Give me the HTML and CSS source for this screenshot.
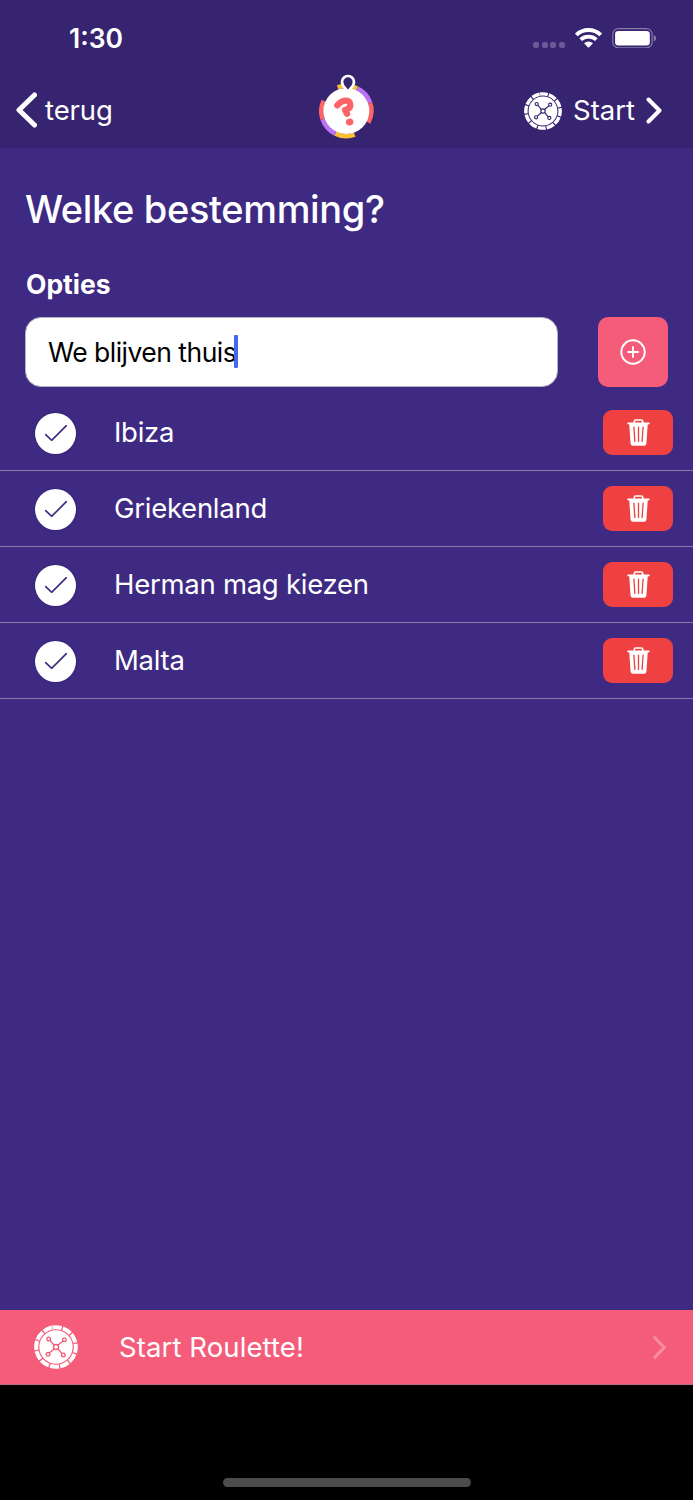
FILE: index.html
```html
<!DOCTYPE html>
<html lang="nl">
<head>
<meta charset="utf-8">
<title>Welke bestemming?</title>
<link rel="stylesheet" href="styles.css">
</head>
<body>
<svg class="defs" aria-hidden="true">
  <symbol id="wheel" viewBox="-66 -66 132 132">
    <circle r="59.5" fill="none" stroke="#fff" stroke-width="12" stroke-dasharray="27.15 4" transform="rotate(-100)"/>
    <circle r="50" fill="#fff"/>
    <g class="cut">
      <path d="M-18-20-6-6M21-18 6-6M18 20 6 6M-20 18-6 6"/>
      <circle r="7.5"/>
      <circle cx="-22" cy="-24" r="5.5"/>
      <circle cx="25" cy="-22" r="5.5"/>
      <circle cx="22" cy="24" r="5.5"/>
      <circle cx="-24" cy="22" r="5.5"/>
    </g>
  </symbol>
  <symbol id="trash" viewBox="0 0 68 82">
    <path d="M21 14V8Q21 3 26 3H42Q47 3 47 8V14" fill="none" stroke="#fff" stroke-width="5"/>
    <path d="M2 11H66Q68 11 68 14Q68 16 66 16L62 17 58 75Q57 81 51 81H17Q11 81 10 75L6 17 2 16Q0 16 0 14Q0 11 2 11Z" fill="#fff"/>
    <path d="M20 25 23 68M34 25V68M48 25 45 68" fill="none" stroke="#ef4141" stroke-width="4" stroke-linecap="round"/>
  </symbol>
  <symbol id="check" viewBox="0 0 66 48">
    <path d="M2 29 20 46 64 2" fill="none" stroke="#3e2a82" stroke-width="5" stroke-linecap="round" stroke-linejoin="miter"/>
  </symbol>
</svg>

<header class="header">
  <div class="status">
    <span class="time">1:30</span>
    <div class="signals">
      <span class="dots"><i></i><i></i><i></i><i></i></span>
      <svg class="wifi" viewBox="0 0 81 60">
        <g fill="none" stroke="#fff" stroke-width="11.500">
          <path d="M4 21Q19 6 40.500 6T77 21"/>
          <path d="M17 35Q27 26 40.500 26T64 35"/>
        </g>
        <path d="M27 46Q40.500 35 54 46L43 57Q40.500 60 38 57Z" fill="#fff"/>
      </svg>
      <svg class="battery" viewBox="0 0 134 62">
        <rect x="2" y="2" width="119" height="58" rx="17" fill="none" stroke="#877ba8" stroke-width="3.500"/>
        <rect x="9" y="9" width="105" height="44" rx="10" fill="#fff"/>
        <path d="M126 21Q133 24 133 31T126 41Z" fill="#877ba8"/>
      </svg>
    </div>
  </div>
  <nav class="nav">
    <a class="back">
      <svg viewBox="0 0 21 36"><path d="M18.500 3 3 18 18.500 33" fill="none" stroke="#fff" stroke-width="5" stroke-linecap="round" stroke-linejoin="round"/></svg>
      <span>terug</span>
    </a>
    <svg class="logo" viewBox="45 15 180 216">
      <g fill="none" stroke-width="14">
        <path d="M113 67A75 75 0 0 1 171 70" stroke="#fcc132"/>
        <path d="M171 70A75 75 0 0 1 210 113" stroke="#bd72f5"/>
        <path d="M210 113A75 75 0 0 1 205 173" stroke="#fd6467"/>
        <path d="M164 209A75 75 0 0 1 106 206" stroke="#fcc132"/>
        <path d="M106 206A75 75 0 0 1 68 163" stroke="#bd72f5"/>
        <path d="M68 163A75 75 0 0 1 71 107" stroke="#fd6467"/>
      </g>
      <circle cx="139" cy="138" r="69" fill="#fff"/>
      <path d="M144 80C137 69 126 64 126 51A18 18 0 0 1 162 51C162 64 151 69 144 80Z" fill="#372470" stroke="#fff" stroke-width="8" stroke-linejoin="round"/>
      <path d="M112 121Q121 109 135 107Q151 106 151 119Q151 132 135 135L141 146" fill="none" stroke="#fd6467" stroke-width="19" stroke-linecap="round" stroke-linejoin="round"/>
      <ellipse cx="149" cy="171" rx="11.500" ry="10" fill="#fd6467" transform="rotate(-20 149 171)"/>
    </svg>
    <a class="next">
      <svg class="wheel"><use href="#wheel"/></svg>
      <span>Start</span>
      <svg class="chev" viewBox="0 0 16 27"><path d="M2.500 2.500 13.500 13.500 2.500 24.500" fill="none" stroke="#fff" stroke-width="4" stroke-linecap="round" stroke-linejoin="round"/></svg>
    </a>
  </nav>
</header>

<main class="content">
  <h1 class="title">Welke bestemming?</h1>
  <h2 class="subtitle">Opties</h2>
  <div class="entry">
    <div class="field"><span>We blijven thuis</span><i class="caret"></i></div>
    <button class="add" aria-label="Toevoegen">
      <svg viewBox="0 0 26 26" fill="none" stroke="#fff" stroke-width="1.900" stroke-linecap="round"><circle cx="13" cy="13" r="11.700"/><path d="M13 8V18M8 13H18"/></svg>
    </button>
  </div>
  <ul class="options">
    <li class="option"><span class="tick"><svg><use href="#check"/></svg></span><span class="name">Ibiza</span><button class="delete"><svg><use href="#trash"/></svg></button></li>
    <li class="option"><span class="tick"><svg><use href="#check"/></svg></span><span class="name">Griekenland</span><button class="delete"><svg><use href="#trash"/></svg></button></li>
    <li class="option"><span class="tick"><svg><use href="#check"/></svg></span><span class="name">Herman mag kiezen</span><button class="delete"><svg><use href="#trash"/></svg></button></li>
    <li class="option"><span class="tick"><svg><use href="#check"/></svg></span><span class="name">Malta</span><button class="delete"><svg><use href="#trash"/></svg></button></li>
  </ul>
</main>

<a class="launch">
  <svg class="wheel"><use href="#wheel"/></svg>
  <span>Start Roulette!</span>
  <svg class="chev" viewBox="0 0 13 23"><path d="M1.700 1.700 11.300 11.500 1.700 21.300" fill="none" stroke="#f98ba0" stroke-width="3.200" stroke-linecap="round" stroke-linejoin="round"/></svg>
</a>
<footer class="home"><i class="indicator"></i></footer>
</body>
</html>
```
FILE: styles.css
```css
* { box-sizing: border-box; }
body {
  margin: 0;
  height: 1500px;
  display: flex;
  flex-direction: column;
  background: #000;
  color: #fff;
  font-family: Inter, "Liberation Sans", sans-serif;
  font-size: 27.5px;
  line-height: 34px;
  overflow: hidden;
}
svg { display: block; flex: none; }
button { border: 0; padding: 0; display: flex; align-items: center; justify-content: center; }
.defs { position: absolute; width: 0; height: 0; }
.cut { fill: #fff; stroke: var(--cut); stroke-width: 4; }

.header { height: 148px; background: #372470; --cut: #372470; }
.status { height: 74px; padding: 0 37px 0 69px; display: flex; justify-content: space-between; align-items: center; }
.time { font-size: 26.5px; font-weight: 600; padding-top: 1px; }
.signals { display: flex; align-items: center; padding-top: 2px; }
.dots { display: flex; gap: 2.4px; margin: 13px 10px 0 0; }
.dots i { width: 6px; height: 6px; border-radius: 2px; background: #685a94; }
.wifi { width: 27px; height: 20px; margin-right: 10px; }
.battery { width: 44.5px; height: 20.5px; }
.nav { height: 74px; padding: 0 31px 0 16px; display: grid; grid-template-columns: 1fr 60px 1fr; align-items: center; }
.nav span { padding-bottom: 2px; }
.back { display: flex; align-items: center; gap: 8px; }
.back svg { width: 21px; height: 36px; margin-top: -2px; }
.back span { letter-spacing: -0.1px; }
.logo { width: 60px; height: 72px; margin: -10px 0 0 6px; }
.next { display: flex; align-items: center; justify-content: flex-end; }
.next .wheel { width: 38px; height: 38px; margin-right: 11px; }
.next .chev { width: 16px; height: 27px; margin: -1px 0 0 11px; }

.content { flex: 1; background: #3e2a82; }
.title { margin: 0; padding: 37px 25px 0; font-size: 38px; line-height: 48px; font-weight: 500; letter-spacing: -0.35px; }
.subtitle { margin: 0; padding: 34px 26px 0; font-size: 26.5px; line-height: 34px; font-weight: 700; }
.entry { display: flex; justify-content: space-between; padding: 16px 25px 0; }
.field { width: 533px; height: 70px; padding-left: 22px; display: flex; align-items: center; background: #fff; border: 1.5px solid #b5b2bd; border-radius: 16px; color: #000; font-size: 26.5px; letter-spacing: -0.52px; }
.caret { width: 4px; height: 33px; border-radius: 1px; background: #4469f0; margin: -1px 0 0 -2.5px; }
.add { width: 70px; height: 70px; border-radius: 10px; background: #f55c7a; }
.add svg { width: 26px; height: 26px; }
.options { list-style: none; margin: 0; padding: 8px 0 0; }
.option { height: 76px; border-bottom: 1px solid #877ba5; padding: 0 20px 0 35px; display: flex; align-items: center; }
.tick { width: 41px; height: 41px; border-radius: 50%; background: #fff; margin: 1px 38px 0 0; display: flex; align-items: center; justify-content: center; box-shadow: 0 0 2px #2b1a63; }
.tick svg { width: 22px; height: 16px; }
.name { flex: 1; padding-bottom: 1px; letter-spacing: -0.27px; }
.delete { width: 70px; height: 45px; border-radius: 9px; background: #ef4141; }
.delete svg { width: 23px; height: 27px; }

.launch { height: 75px; padding: 0 27px 0 34px; display: flex; align-items: center; background: #f55c7a; border-bottom: 1px solid #b96b7d; --cut: #f55c7a; }
.launch .wheel { width: 44px; height: 44px; margin-right: 41px; }
.launch span { letter-spacing: 0.1px; }
.launch .chev { width: 13px; height: 23px; margin-left: auto; }
.home { height: 115px; display: flex; justify-content: center; align-items: flex-end; padding: 0 0 13px; background: #000; }
.indicator { width: 248px; height: 9px; border-radius: 5px; background: #4c4c4c; }
```
